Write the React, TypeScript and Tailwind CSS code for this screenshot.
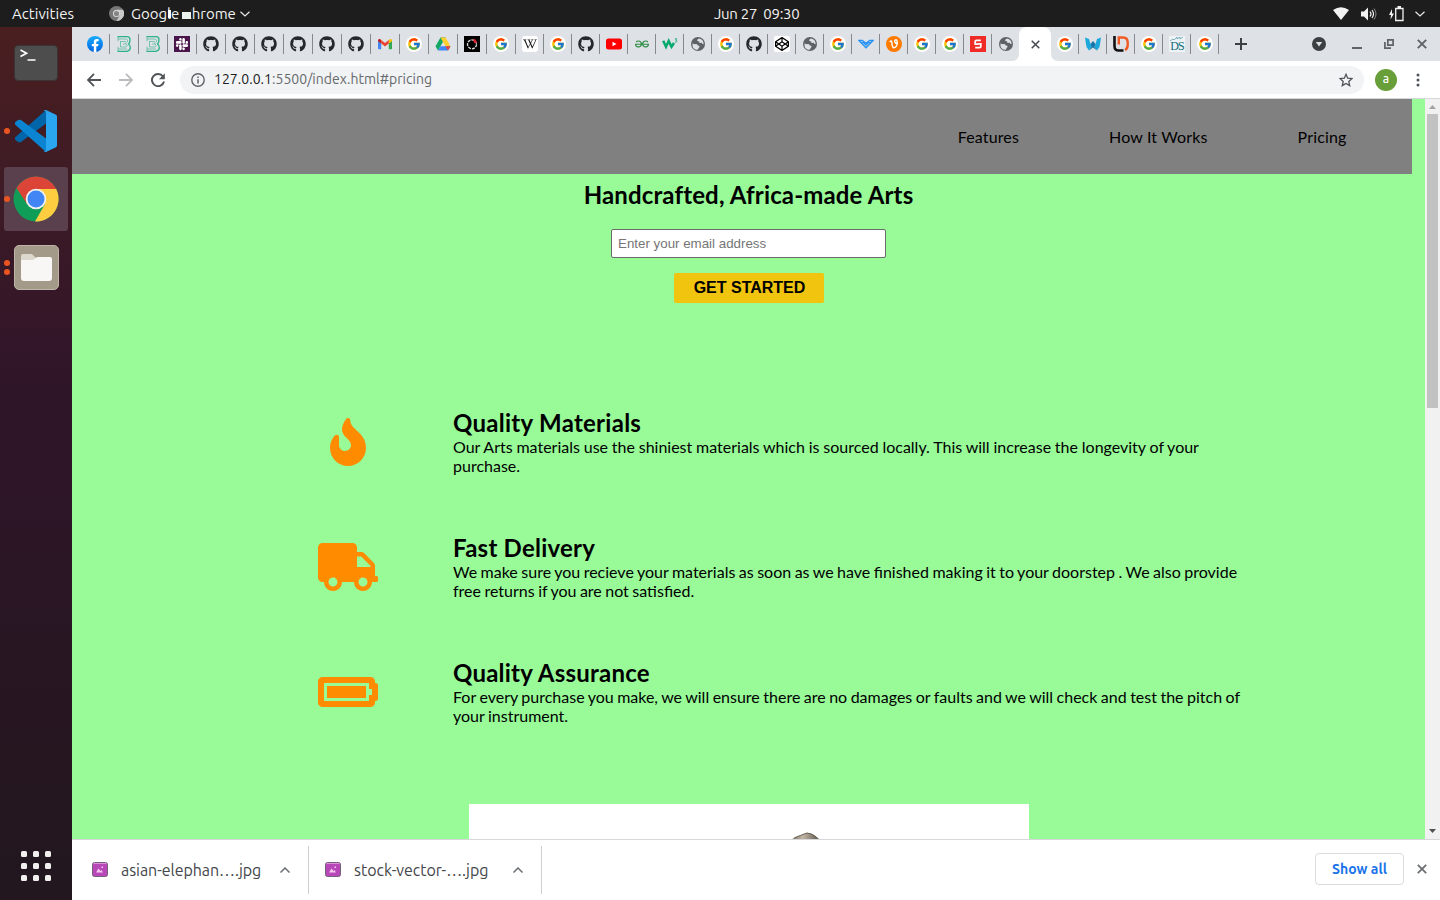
import type { ReactNode } from "react";
import { FaBatteryFull, FaFire, FaGithub, FaSlack, FaTruck, FaWikipediaW, FaCodepen } from "react-icons/fa";
import { FcGoogle } from "react-icons/fc";
import { SiGeeksforgeeks } from "react-icons/si";

const Disc = ({ children }: { children: ReactNode }) => (
  <span className="flex h-4 w-4 items-center justify-center rounded-full bg-white">{children}</span>
);

const Google = () => (
  <Disc>
    <FcGoogle size={14} />
  </Disc>
);

const GitHub = () => <FaGithub size={16} color="#24292e" />;

const Facebook = () => (
  <svg width="16" height="16" viewBox="0 0 16 16">
    <defs>
      <linearGradient id="fb" x1="0" y1="0" x2="0" y2="1">
        <stop offset="0" stopColor="#18acfe" />
        <stop offset="1" stopColor="#0163e0" />
      </linearGradient>
    </defs>
    <circle cx="8" cy="8" r="8" fill="url(#fb)" />
    <path d="M11.1 10.3l.4-2.3H9.3V6.5c0-.6.3-1.3 1.3-1.3h1v-2s-.9-.1-1.8-.1c-1.9 0-3 1.100-3 3.100V8h-2v2.300h2v5.600c.8.1 1.700.1 2.500 0v-5.600z" fill="#fff" />
  </svg>
);

const LetterB = () => (
  <svg width="16" height="16" viewBox="0 0 16 16" fill="none" stroke="#2fb08d">
    <path d="M1.500 .7H11q3 0 3 3T12.500 8q1.800 1 1.800 3.700T11 15.300H1.500" strokeWidth="1.300" />
    <path d="M2 .7v4.500M2 10.800v4.500M4.500 5v6M4.500 5.500H9.500q1.500 1.200 0 2.500H7M4.500 11H10q2-1.500 0-3M2 3h8.500q1.500 1 1 3M2 13h9" strokeWidth=".8" opacity=".75" />
  </svg>
);

const Slack = () => (
  <span className="flex h-4 w-4 items-center justify-center bg-[#4a154b]">
    <FaSlack size={14} color="#fff" />
  </span>
);

const Gmail = () => (
  <svg width="16" height="16" viewBox="0 0 16 16">
    <path d="M1 4.500V12.500q0 .8.800.8H4.200V7z" fill="#4285f4" />
    <path d="M15 4.500V12.500q0 .8-.8.800H11.800V7z" fill="#34a853" />
    <path d="M1 4.500q0-2 2-1.500l1.200 1V7.500L1 5.200z" fill="#c5221f" />
    <path d="M15 4.500q0-2-2-1.500l-1.200 1V7.500L15 5.200z" fill="#fbbc04" />
    <path d="M4.200 4L8 6.900 11.800 4v3.500L8 10.400 4.200 7.500z" fill="#ea4335" />
  </svg>
);

const Drive = () => (
  <svg width="16" height="16" viewBox="0 0 16 16">
    <path d="M5.500 1.500L.5 10.200 3 14.500 8 5.800z" fill="#11a861" />
    <path d="M5.500 1.500h5L8 5.800z" fill="#188038" />
    <path d="M10.500 1.500l5 8.700h-5L5.500 1.500z" fill="#ffcf2e" />
    <path d="M5.500 10.200h10L13 14.500H3z" fill="#4285f4" />
    <path d="M10.500 10.200h5L13 14.500z" fill="#ea4335" />
  </svg>
);

const DarkRing = () => (
  <svg width="16" height="16" viewBox="0 0 16 16">
    <path d="M0 0h16v16H0z" fill="#000" />
    <circle cx="8" cy="8.300" r="4.500" fill="none" stroke="#ddd" strokeWidth="1.300" strokeDasharray="3 1" />
    <path d="M9 3l2.500.5L13 6.500l-3 .5z" fill="#e0202c" />
  </svg>
);

const Wikipedia = () => (
  <span className="flex h-4 w-4 items-center justify-center rounded-[3px] bg-white">
    <FaWikipediaW size={14} color="#111" />
  </span>
);

const YouTube = () => (
  <svg width="16" height="16" viewBox="0 0 16 16">
    <rect y="2.500" width="16" height="11" rx="2.500" fill="#f00" />
    <path d="M6.500 5.700v4.600L10.500 8z" fill="#fff" />
  </svg>
);

const W3 = () => (
  <svg width="16" height="16" viewBox="0 0 16 16" fill="none" stroke="#04aa6d">
    <path d="M1.200 4.800L4 10.800 6.700 5l2.800 5.800L12 7" strokeWidth="2.500" />
    <path d="M12.800 2.800h2l-1.200 1.400q1.500 0 1.300 1.200t-2 .7" strokeWidth=".8" />
  </svg>
);

const Globe = () => (
  <svg width="16" height="16" viewBox="0 0 16 16">
    <circle cx="8" cy="8" r="7" fill="#5f6368" />
    <path d="M2.500 7.200q1.500 1.300 3.300.9 1.600 0 1.900 1.400l1.700.3q.5 1.800-.9 2.300l-.5 1.700Q3.500 14.200 2.500 10z" fill="#dee1e6" />
    <path d="M9 2.400Q6.800 3.200 7.100 4.800l2 .6.400 1.500 2.300-.2q.6 1.600 1.700 1.500Q14 3.600 9 2.400z" fill="#dee1e6" />
  </svg>
);

const CodePen = () => (
  <span className="flex h-4 w-4 items-center justify-center rounded-[2px] bg-white">
    <FaCodepen size={14} color="#000" />
  </span>
);

const BlueWings = () => (
  <svg width="16" height="16" viewBox="0 0 16 16" fill="none" stroke="#2492f5" strokeWidth="1.300">
    <path d="M.8 4.300h3.500L8 7.300l3.700-3h3.500L8 11.800z" />
    <path d="M3 6.300l2.500.2L8 9l2.500-2.500 2.500-.2" />
  </svg>
);

const OrangeMark = () => (
  <svg width="16" height="16" viewBox="0 0 16 16" fill="none">
    <circle cx="8" cy="8" r="8" fill="#ff7a00" />
    <path d="M3.700 6q2-2.200 2.200.5.200 5.500 2.100 5.200 3-.4 3.200-4.700.1-3.500-1.500-3.200-1.700.5-.6 2.700 1 1.300 3 .8" stroke="#fff" strokeWidth="1.400" />
  </svg>
);

const RedMark = () => (
  <svg width="16" height="16" viewBox="0 0 16 16" fill="none">
    <path d="M0 0h16v16H0z" fill="#ee2b24" />
    <path d="M10.800 4.300H6.500q-1.300 0-1.300 1.200v2.700H8M8 7.800h2.800v2.700q0 1.200-1.300 1.200H5.200" stroke="#fff" strokeWidth="1.800" />
  </svg>
);

const BlueW = () => (
  <svg width="16" height="16" viewBox="0 0 16 16">
    <path d="M0 1.500l4 1.500 2.500 8L4 14.500 1.500 11z" fill="#1ba8dc" />
    <path d="M16 1.500l-4 1.500-2.500 8 2.500 3.500 2.500-3.500z" fill="#1ba8dc" />
    <path d="M8 5l2.500 3L9.500 11 12 14.500 8 11.500 4 14.500 6.500 11 5.500 8z" fill="#1675a9" />
  </svg>
);

const LD = () => (
  <svg width="16" height="16" viewBox="0 0 16 16" fill="none">
    <path d="M1.500 0v10q0 4.500 4 4.500h5" stroke="#111" strokeWidth="2.600" />
    <path d="M5.800 8.500V1.500H10q4.700 0 4.700 5V9q0 3.800-2.700 5" stroke="#f15a22" strokeWidth="2.400" />
  </svg>
);

const DS = () => (
  <span className="relative flex h-4 w-4 items-end justify-center bg-[#eef4f5] font-['Liberation_Serif',serif] text-[12px] leading-[11px] tracking-[-1px] text-[#126a7c]">
    DS
    <svg className="absolute top-0 left-0" width="16" height="6" viewBox="0 0 16 6" fill="none" stroke="#639eaa" strokeWidth=".8">
      <path d="M1 5l3-2 1 1 3-3v2l3-2v2l3-2" />
    </svg>
  </span>
);

const Tab = ({ children, wide, last }: { children: ReactNode; wide?: boolean; last?: boolean }) => (
  <div className={`flex h-5 shrink-0 items-center border-r pl-1.5 ${wide ? "w-[29px]" : "w-7"} ${last ? "border-transparent" : "border-[#85888c]"}`}>
    {children}
  </div>
);

const wideTabs = [Facebook, LetterB, LetterB, Slack, GitHub, GitHub, GitHub, GitHub, GitHub, GitHub, Gmail, Google, Drive, DarkRing, Google];
const Geeks = () => <SiGeeksforgeeks size={14} color="#2f8d46" className="ml-px" />;
const tabs = [Wikipedia, Google, GitHub, YouTube, Geeks, W3, Globe, Google, GitHub, CodePen, Globe, Google, BlueWings, OrangeMark, Google, Google, RedMark, Globe];
const tailTabs = [Google, BlueW, LD, Google, DS, Google];

const Cross = ({ size, color, width = 1.8 }: { size: number; color: string; width?: number }) => (
  <svg width={size} height={size} viewBox="0 0 10 10" stroke={color} strokeWidth={width}>
    <path d="M.8.8l8.400 8.400M9.200.8L.8 9.200" />
  </svg>
);

function TopBar() {
  return (
    <header className="flex h-[27px] shrink-0 items-center bg-[#1d1d1d] text-[15px] leading-5 text-[#f2f2f2]">
      <div className="flex w-[480px] items-center pl-3">
        <span className="w-[97px] whitespace-nowrap tracking-[0.05px]">Activities</span>
        <svg width="15" height="15" viewBox="0 0 16 16">
          <circle cx="8" cy="8" r="8" fill="#777" />
          <path d="M8 4h7a8 8 0 0 1-7 12l3.500-6z" fill="#c9c9c9" />
          <circle cx="8" cy="8" r="3.800" fill="#ddd" />
          <circle cx="8" cy="8" r="2.800" fill="#858585" />
        </svg>
        <span className="relative ml-[7px] w-[109px] whitespace-nowrap tracking-[-0.03px]">
          Google Chrome
          <span className="absolute top-[6px] left-[37px] h-2 w-[3px] bg-white" />
          <span className="absolute top-[3px] left-[49.500px] h-[13px] w-[10px] bg-[#1d1d1d]" />
          <span className="absolute top-[8px] left-[51px] h-[7px] w-[9px] bg-[#ecf3ec]" />
        </span>
        <svg width="10" height="6" viewBox="0 0 10 6" fill="none" stroke="#e8e8e8" strokeWidth="1.200">
          <path d="M.5.700L5 5 9.500.700" />
        </svg>
      </div>
      <div className="w-[553px] pl-[234px] tracking-[-0.300px] whitespace-pre">Jun 27  09:30</div>
      <div className="ml-[300px] flex items-center">
        <svg width="16" height="13" viewBox="0 0 16 13">
          <path d="M0 3Q8-2.500 16 3L8 13z" fill="#f2f2f2" />
        </svg>
        <svg className="ml-[12px]" width="16" height="14" viewBox="0 0 16 14" fill="none" stroke="#f2f2f2">
          <path d="M0 4.500h3L7 .5v13L3 9.500H0z" fill="#f2f2f2" stroke="none" />
          <path d="M9 4.500q2 2.500 0 5M11 3q3 4 0 8" strokeWidth="1.200" />
          <path d="M13 1.500q4 5.500 0 11" strokeWidth="1" opacity=".5" />
        </svg>
        <svg className="ml-[12px]" width="15" height="16" viewBox="0 0 15 16" fill="none">
          <path d="M3 3L0 9h2l-.5 4.500L5 7.500H3z" fill="#f2f2f2" />
          <path d="M6.700 2.500H14v12H6.700z" stroke="#f2f2f2" strokeWidth="1.300" />
          <path d="M8.500 0h3.500v2H8.500z" fill="#f2f2f2" />
        </svg>
        <svg className="ml-[11px]" width="10" height="6" viewBox="0 0 10 6" fill="none" stroke="#e8e8e8" strokeWidth="1.200">
          <path d="M.5.700L5 5 9.500.700" />
        </svg>
      </div>
    </header>
  );
}

function Dock() {
  const dot = "h-1.5 w-1.5 rounded-full bg-[#e95420]";
  return (
    <aside className="flex w-[72px] shrink-0 flex-col items-center bg-linear-to-b from-[#4a1f20] via-[#301529] via-40% to-[#22171e] pt-1">
      <div className="flex h-16 items-center">
        <div className="h-9 w-11 rounded-[4px] border border-[#3a3434] bg-[#4d4d4d]">
          <svg width="42" height="34" viewBox="0 0 42 34" fill="none" stroke="#fff" strokeWidth="1.700">
            <path d="M5.500 4l6 3.200-6 3.200M12.500 14h8" />
          </svg>
        </div>
      </div>
      <div className="mt-1 flex h-16 w-full items-center">
        <span className={`ml-1 ${dot}`} />
        <svg className="ml-[5px]" width="42" height="42" viewBox="0 0 42 42">
          <path d="M0 27.500q-.5 1.500.5 2.500L3 32q1.500.7 3 0L31 13.500V0z" fill="#0065a9" />
          <path d="M0 14.500q-.5-1.500.5-2.500L3 10q1.500-.7 3 0l25 18.500V42z" fill="#0b84d2" />
          <path d="M31 0l10 4.800q1 .6 1 1.700v29q0 1.200-1 1.700L31 42q-1.500.2-2.500-1 2.500 1 2.500-1.500v-37Q31 0 28.500 1q1-1.200 2.500-1z" fill="#2aa5f0" />
        </svg>
      </div>
      <div className="mt-1 flex h-16 w-16 items-center rounded-[3px] bg-[#5a3f4d]">
        <span className={dot} />
        <svg className="ml-[3px]" width="46" height="46" viewBox="0 0 46 46">
          <circle cx="23" cy="23" r="22.500" fill="#109d58" />
          <path d="M3.500 12A22.500 22.500 0 0 1 43.200 13H23L14 28z" fill="#db4437" />
          <path d="M43.200 13A22.500 22.500 0 0 1 22 45.500L32 28l-9-15z" fill="#ffcd40" />
          <circle cx="23" cy="23" r="10.300" fill="#f1f1f1" />
          <circle cx="23" cy="23" r="8.500" fill="#4285f4" />
        </svg>
      </div>
      <div className="mt-1 flex h-16 w-full items-center">
        <div className="ml-1 flex flex-col gap-[3px]">
          <span className={dot} />
          <span className={dot} />
        </div>
        <div className="ml-[3.500px] flex h-[45px] w-[45px] items-center justify-center rounded-[5px] border border-[#bdb5a6] bg-[#a39a89]">
          <svg width="33" height="29" viewBox="0 0 33 29">
            <path d="M1 3q0-2 2-2h9l4 4v5H1z" fill="#dcd8cc" />
            <path d="M1 8q0-1 1-1h10q2 0 3-1.500 1-1.500 3-1.500h12q2 0 2 2v19q0 3-3 3H4q-3 0-3-3z" fill="#f8f7f5" />
          </svg>
        </div>
      </div>
      <div className="mt-auto mb-[19px] grid grid-cols-3 gap-1.5">
        {Array.from({ length: 9 }, (_, i) => (
          <span key={i} className="h-1.5 w-1.5 rounded-[1.5px] bg-[#f2f0ef]" />
        ))}
      </div>
    </aside>
  );
}

function TabStrip() {
  return (
    <div className="flex h-[34px] shrink-0 items-center bg-[#dee1e6] pl-[9px]">
      {wideTabs.map((Icon, i) => (
        <Tab key={i} wide>
          <Icon />
        </Tab>
      ))}
      {tabs.map((Icon, i) => (
        <Tab key={i} last={i === tabs.length - 1}>
          <Icon />
        </Tab>
      ))}
      <div className="relative -ml-px flex h-full w-8 shrink-0 items-center justify-center rounded-t-lg bg-white">
        <Cross size={9} color="#45494d" width={1.7} />
        <svg className="absolute bottom-0 -left-2" width="8" height="8">
          <path d="M8 0v8H0q8 0 8-8" fill="#fff" />
        </svg>
        <svg className="absolute -right-2 bottom-0" width="8" height="8">
          <path d="M0 0v8h8q-8 0-8-8" fill="#fff" />
        </svg>
      </div>
      {tailTabs.map((Icon, i) => (
        <Tab key={i}>
          <Icon />
        </Tab>
      ))}
      <svg className="ml-4" width="12" height="12" viewBox="0 0 12 12" stroke="#3c4043" strokeWidth="2">
        <path d="M6 0v12M0 6h12" />
      </svg>
      <svg className="ml-[65px]" width="14" height="14" viewBox="0 0 14 14">
        <circle cx="7" cy="7" r="7" fill="#3c4043" />
        <path d="M3.800 5h6.400L7 9.500z" fill="#dee1e6" />
      </svg>
      <svg className="ml-[26px]" width="10" height="10" viewBox="0 0 10 10">
        <path d="M0 8h10v2H0z" fill="#5f6368" />
      </svg>
      <svg className="ml-[22px]" width="10" height="10" viewBox="0 0 10 10" fill="none" stroke="#5f6368" strokeWidth="1.700">
        <path d="M3.800.9h5.300v5.200H3.800zM.9 3v6.200H7" />
      </svg>
      <span className="ml-[23px]">
        <Cross size={10} color="#5f6368" width={1.9} />
      </span>
    </div>
  );
}

function Toolbar() {
  return (
    <div className="flex h-[38px] shrink-0 items-center border-b border-[#d5d7da] bg-white pl-[15px]">
      <svg width="14" height="14" viewBox="0 0 14 14" fill="none" stroke="#505357" strokeWidth="1.800">
        <path d="M14 7H1.500M7 .8L1 7l6 6.200" />
      </svg>
      <svg className="ml-[18px]" width="14" height="14" viewBox="0 0 14 14" fill="none" stroke="#b9bbbe" strokeWidth="1.800">
        <path d="M0 7h12.500M7 .8L13 7l-6 6.200" />
      </svg>
      <svg className="ml-[18px]" width="14" height="14" viewBox="0 0 14 14" fill="none" stroke="#505357" strokeWidth="1.900">
        <path d="M12 3.500A6.100 6.100 0 1 0 13 8.500" />
        <path d="M13.800.3v5.900H8z" fill="#505357" stroke="none" />
      </svg>
      <div className="ml-[15px] flex h-7 w-[1184px] items-center rounded-full bg-[#f1f3f4] pr-[11px] pl-[11px]">
        <svg width="14" height="14" viewBox="0 0 14 14" fill="none" stroke="#5f6368" strokeWidth="1.400">
          <circle cx="7" cy="7" r="6.200" />
          <path d="M7 6.200v4.300M7 3.500v1.500" strokeWidth="1.500" />
        </svg>
        <span className="ml-[9px] text-[14px] tracking-[0.030px] whitespace-nowrap text-[#66696d]">
          <span className="text-[#202124]">127.0.0.1</span>:5500/index.html#pricing
        </span>
        <svg className="ml-auto" width="14" height="14" viewBox="0 0 14 14" fill="none" stroke="#505357" strokeWidth="1.300">
          <path d="M7 1.300l1.700 3.900 4.300.4-3.200 2.800.9 4.200L7 10.400l-3.700 2.200.9-4.200L1 5.600l4.300-.4z" />
        </svg>
      </div>
      <span className="ml-[11px] flex h-[22px] w-[22px] items-center justify-center rounded-full bg-[#689f38] pb-[2px] text-[12px] font-medium text-white">a</span>
      <svg className="ml-[19px]" width="4" height="14" viewBox="0 0 4 14" fill="#505357">
        <circle cx="2" cy="2" r="1.500" />
        <circle cx="2" cy="7" r="1.500" />
        <circle cx="2" cy="12" r="1.500" />
      </svg>
    </div>
  );
}

const features = [
  {
    Icon: FaFire,
    title: "Quality Materials",
    text: "Our Arts materials use the shiniest materials which is sourced locally. This will increase the longevity of your purchase.",
    spacing: "[word-spacing:-0.3px]",
    heading: "tracking-[0.27px]",
  },
  {
    Icon: FaTruck,
    title: "Fast Delivery",
    text: "We make sure you recieve your materials as soon as we have finished making it to your doorstep . We also provide free returns if you are not satisfied.",
    spacing: "[word-spacing:-0.62px]",
    heading: "tracking-[0.23px]",
  },
  {
    Icon: FaBatteryFull,
    title: "Quality Assurance",
    text: "For every purchase you make, we will ensure there are no damages or faults and we will check and test the pitch of your instrument.",
    spacing: "[word-spacing:-0.62px]",
    heading: "tracking-[0.22px]",
  },
];

function Page() {
  return (
    <main className="min-w-0 flex-1 overflow-hidden bg-[#98fb98] font-['Lato',sans-serif] text-[16px] leading-[19px] text-black">
      <nav className="flex h-[75px] w-[1340px] items-center justify-end gap-[90px] bg-[#808080] pr-[65.500px] tracking-[0.150px]">
        <a>Features</a>
        <a>How It Works</a>
        <a>Pricing</a>
      </nav>
      <section className="flex flex-col items-center pt-[6px]">
        <h2 className="text-[24px] leading-[29px] font-bold tracking-[0.140px]">Handcrafted, Africa-made Arts</h2>
        <input
          className="mt-[20px] h-[29px] w-[275px] rounded-[2px] border border-[#6b6b6b] bg-white px-1.5 font-['Liberation_Sans',sans-serif] text-[13.333px] placeholder:text-[#757575]"
          placeholder="Enter your email address"
        />
        <button className="mt-[15px] h-[30px] w-[150px] rounded-[2px] bg-[#f1c40f] pb-[2px] pl-[2px] font-['Liberation_Sans',sans-serif] text-[16px] font-bold">GET STARTED</button>
      </section>
      <section className="mt-[105px] flex flex-col gap-[58px] pl-[216px]">
        {features.map(({ Icon, title, text, spacing, heading }) => (
          <div key={title} className="flex h-[67px] items-center">
            <div className="flex w-[120px] justify-center">
              <Icon className="h-12 w-[60px]" color="#ff8c00" />
            </div>
            <div className="ml-[45px] w-[795px]">
              <h2 className={`text-[24px] leading-[29px] font-bold ${heading}`}>{title}</h2>
              <p className={spacing}>{text}</p>
            </div>
          </div>
        ))}
      </section>
      <div className="mx-auto mt-[79px] flex h-[200px] w-[560px] justify-center bg-white">
        <svg className="mt-7 ml-[114px] h-[40px] w-[28px]" viewBox="0 0 28 40">
          <defs>
            <linearGradient id="photo">
              <stop offset="0" stopColor="#837c70" />
              <stop offset=".4" stopColor="#c3b5a5" />
              <stop offset="1" stopColor="#5e584e" />
            </linearGradient>
          </defs>
          <path d="M0 7Q6 4 15 1q4-.5 8 2.500l4 3.500v33H0z" fill="url(#photo)" />
          <path d="M2 6Q8 3.500 15 1q5 0 10 5" fill="none" stroke="#666157" strokeWidth="1" />
        </svg>
      </div>
    </main>
  );
}

function Scrollbar() {
  return (
    <div className="flex w-[15px] shrink-0 flex-col items-center bg-[#f1f1f1]">
      <svg className="mt-1.5 shrink-0" width="7" height="4" viewBox="0 0 7 4">
        <path d="M0 4l3.500-4L7 4z" fill="#a3a3a3" />
      </svg>
      <div className="mt-[5px] h-[294px] w-[11px] shrink-0 bg-[#c1c1c1]" />
      <svg className="mt-auto mb-1.5 shrink-0" width="7" height="4" viewBox="0 0 7 4">
        <path d="M0 0h7L3.500 4z" fill="#505050" />
      </svg>
    </div>
  );
}

const ImageFile = () => (
  <svg className="mb-[2px]" width="16" height="15" viewBox="0 0 16 15">
    <rect x=".5" y=".5" width="15" height="14" rx="2" fill="#b848b8" stroke="#746078" />
    <path d="M1.500 1.500h13" stroke="#dc92da" />
    <path d="M4 10.500l2.500-4L8.500 9l1-1 1.500 2.500zM9.500 4.500h1.500V6H9.500z" fill="#f3c9f0" />
  </svg>
);

function Download({ name, spacing }: { name: string; spacing: string }) {
  return (
    <div className="flex h-12 w-[233px] items-center border-r border-[#cdcfd2] pl-4">
      <ImageFile />
      <span className={`ml-[13px] w-[159px] text-[16px] whitespace-nowrap text-[#43464a] ${spacing}`}>{name}</span>
      <svg width="10" height="6" viewBox="0 0 10 6" fill="none" stroke="#6b6e72" strokeWidth="1.500">
        <path d="M.5 5.500L5 1l4.500 4.500" />
      </svg>
    </div>
  );
}

function Downloads() {
  return (
    <footer className="flex h-[61px] shrink-0 items-center border-t border-[#d5d7da] bg-white pl-1">
      <Download name="asian-elephan….jpg" spacing="tracking-[-0.05px]" />
      <Download name="stock-vector-….jpg" spacing="tracking-[-0.02px]" />
      <button className="mb-[2px] ml-auto h-8 w-[89px] rounded-[4px] border border-[#dadce0] text-[14px] font-semibold whitespace-nowrap text-[#1a73e8]">Show all</button>
      <span className="mr-[13px] mb-[2px] ml-[13px]">
        <Cross size={10} color="#6b6e72" width={1.8} />
      </span>
    </footer>
  );
}

export default function App() {
  return (
    <div className="flex h-[900px] w-[1440px] flex-col overflow-hidden font-['Ubuntu','Noto_Sans',sans-serif]">
      <TopBar />
      <div className="flex min-h-0 flex-1">
        <Dock />
        <div className="flex min-w-0 flex-1 flex-col">
          <TabStrip />
          <Toolbar />
          <div className="flex min-h-0 flex-1">
            <Page />
            <Scrollbar />
          </div>
          <Downloads />
        </div>
      </div>
    </div>
  );
}
